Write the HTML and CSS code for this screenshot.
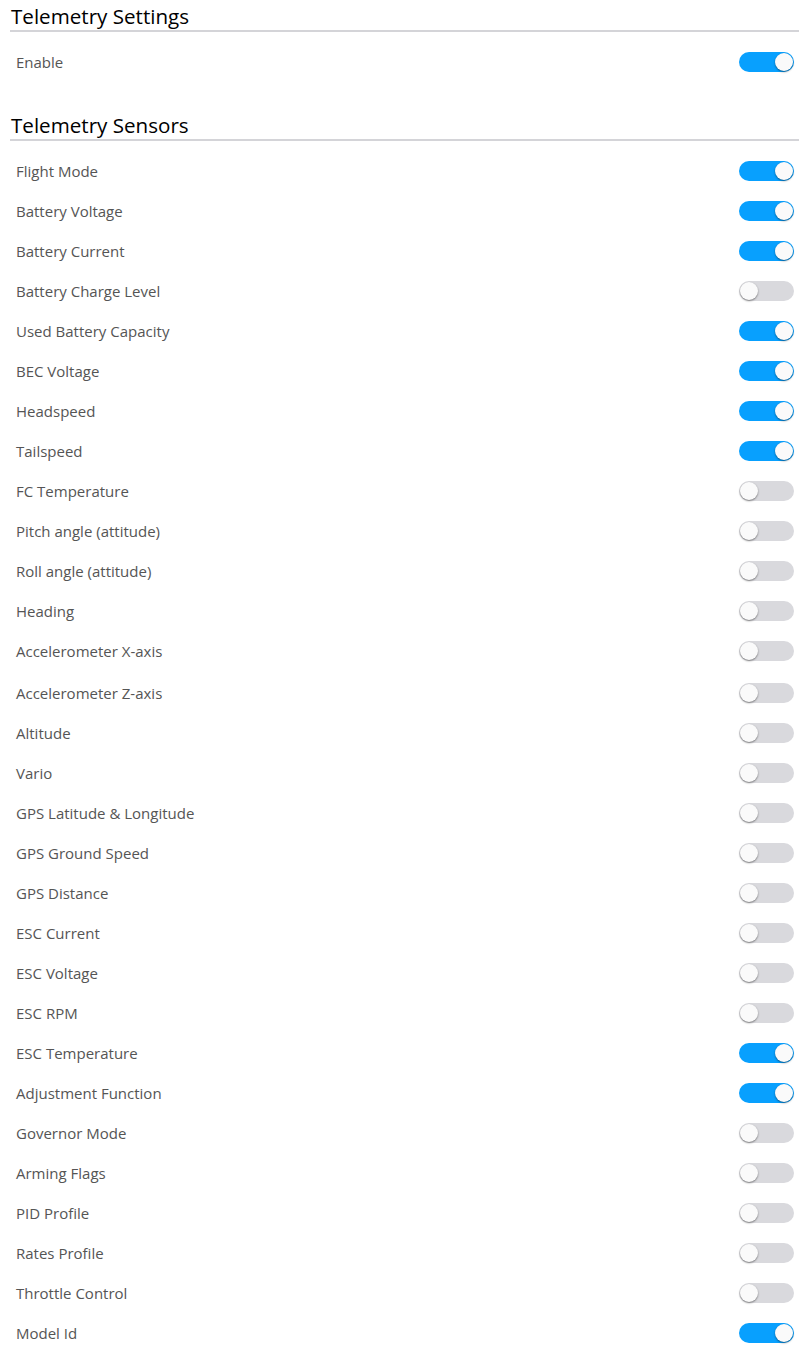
FILE: index.html
```html
<!DOCTYPE html>
<html>
<head>
<meta charset="utf-8">
<link rel="stylesheet" href="styles.css">
</head>
<body>
<section class="section">
  <h2 class="title">Telemetry Settings</h2>
  <div class="row"><span class="label">Enable</span><span class="toggle on"></span></div>
</section>
<section class="section second">
  <h2 class="title">Telemetry Sensors</h2>
  <div class="row"><span class="label">Flight Mode</span><span class="toggle on"></span></div>
  <div class="row"><span class="label">Battery Voltage</span><span class="toggle on"></span></div>
  <div class="row"><span class="label">Battery Current</span><span class="toggle on"></span></div>
  <div class="row"><span class="label">Battery Charge Level</span><span class="toggle"></span></div>
  <div class="row"><span class="label">Used Battery Capacity</span><span class="toggle on"></span></div>
  <div class="row"><span class="label">BEC Voltage</span><span class="toggle on"></span></div>
  <div class="row"><span class="label">Headspeed</span><span class="toggle on"></span></div>
  <div class="row"><span class="label">Tailspeed</span><span class="toggle on"></span></div>
  <div class="row"><span class="label">FC Temperature</span><span class="toggle"></span></div>
  <div class="row"><span class="label">Pitch angle (attitude)</span><span class="toggle"></span></div>
  <div class="row"><span class="label">Roll angle (attitude)</span><span class="toggle"></span></div>
  <div class="row"><span class="label">Heading</span><span class="toggle"></span></div>
  <div class="row"><span class="label">Accelerometer X-axis</span><span class="toggle"></span></div>
  <div class="row spaced"><span class="label">Accelerometer Z-axis</span><span class="toggle"></span></div>
  <div class="row"><span class="label">Altitude</span><span class="toggle"></span></div>
  <div class="row"><span class="label">Vario</span><span class="toggle"></span></div>
  <div class="row"><span class="label">GPS Latitude &amp; Longitude</span><span class="toggle"></span></div>
  <div class="row"><span class="label">GPS Ground Speed</span><span class="toggle"></span></div>
  <div class="row"><span class="label">GPS Distance</span><span class="toggle"></span></div>
  <div class="row"><span class="label">ESC Current</span><span class="toggle"></span></div>
  <div class="row"><span class="label">ESC Voltage</span><span class="toggle"></span></div>
  <div class="row"><span class="label">ESC RPM</span><span class="toggle"></span></div>
  <div class="row"><span class="label">ESC Temperature</span><span class="toggle on"></span></div>
  <div class="row"><span class="label">Adjustment Function</span><span class="toggle on"></span></div>
  <div class="row"><span class="label">Governor Mode</span><span class="toggle"></span></div>
  <div class="row"><span class="label">Arming Flags</span><span class="toggle"></span></div>
  <div class="row"><span class="label">PID Profile</span><span class="toggle"></span></div>
  <div class="row"><span class="label">Rates Profile</span><span class="toggle"></span></div>
  <div class="row"><span class="label">Throttle Control</span><span class="toggle"></span></div>
  <div class="row"><span class="label">Model Id</span><span class="toggle on"></span></div>
</section>
</body>
</html>
```
FILE: styles.css
```css
html, body {
  margin: 0;
  padding: 0;
  background: #ffffff;
}
body {
  font-family: "Open Sans", "Liberation Sans", sans-serif;
}
.section {
  padding: 0 10px;
}
.section.second {
  margin-top: 27px;
}
.title {
  margin: 0 0 10px 0;
  padding: 2px 0 0 1px;
  height: 28px;
  line-height: 28px;
  font-size: 20.6px;
  font-weight: 400;
  color: #000000;
  border-bottom: 2px solid #d4d4d8;
}
.row {
  height: 40px;
  display: flex;
  align-items: center;
  justify-content: space-between;
  padding: 0 5px 0 6px;
}
.row.spaced {
  margin-top: 2px;
}
.label {
  font-size: 15px;
  color: #555555;
}
.toggle {
  position: relative;
  width: 55px;
  height: 20px;
  border-radius: 10px;
  background: #d9d9dd;
  flex: none;
}
.toggle::after {
  content: "";
  position: absolute;
  top: 1px;
  left: 1px;
  width: 18px;
  height: 18px;
  border-radius: 50%;
  background: #fafafa;
  box-shadow: 0 1px 2px rgba(0, 0, 0, 0.45);
}
.toggle.on {
  background: #08a0fe;
}
.toggle.on::after {
  left: auto;
  right: 1px;
}
```
